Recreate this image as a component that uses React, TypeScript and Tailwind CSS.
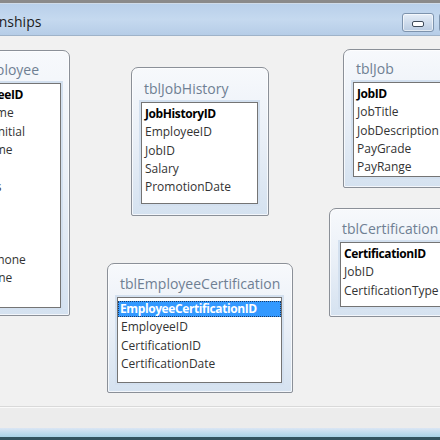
import React from "react";

type Field = { name: string; bold?: boolean; selected?: boolean };
type BoxProps = {
  title: string;
  left: number;
  top: number;
  w: number;
  h: number;
  listLeft: number;
  listTop: number;
  listW: number;
  listH: number;
  titleLeft?: number;
  fields: Field[];
};

function TableBox(p: BoxProps) {
  return (
    <div
      className="absolute rounded-t-[7px] rounded-b-[2px] border border-[#8b9098] bg-gradient-to-b from-[#f7f9fc] via-[#e9eff7] to-[#d5e2f0] shadow-[inset_0_0_0_1px_rgba(255,255,255,0.7)]"
      style={{ left: p.left, top: p.top, width: p.w, height: p.h }}
    >
      <div
        className="absolute whitespace-nowrap text-[14px] leading-[20px] text-[#6f7f93]"
        style={{ left: p.titleLeft ?? 12, top: p.listTop - 24 }}
      >
        {p.title}
      </div>
      <div
        className="absolute overflow-hidden border border-[#747474] bg-white pt-[2px] shadow-[0_0_0_2px_#d3e0ef]"
        style={{ left: p.listLeft - 1, top: p.listTop - 1, width: p.listW, height: p.listH }}
      >
        {p.fields.map((f) => (
          <div key={f.name} className="flex h-[18.3px] items-center whitespace-nowrap">
            {f.selected ? (
              <div className="flex h-[16px] w-full items-center bg-[#3399ff] pl-[2px] text-[12px] font-bold tracking-[-0.4px] text-white outline outline-1 outline-dotted outline-[#1a3a66] -outline-offset-1">
                {f.name}
              </div>
            ) : (
              <div
                className={
                  f.bold
                    ? "pl-[3px] text-[12px] font-bold tracking-[-0.4px] text-black"
                    : "pl-[3px] text-[12px] text-[#333333]"
                }
              >
                {f.name}
              </div>
            )}
          </div>
        ))}
      </div>
    </div>
  );
}

export default function App() {
  return (
    <div
      className="flex h-[440px] w-[440px] flex-col overflow-hidden bg-[#f0f0f0]"
      style={{ fontFamily: '"Open Sans", "Noto Sans", sans-serif' }}
    >
      <div className="h-[3px] shrink-0 bg-[#8a8a8a]" />
      <div className="h-[1px] shrink-0 bg-[#cfdbe8]" />
      <div className="flex h-[31px] shrink-0 items-start bg-gradient-to-b from-[#b9d0ea] via-[#c5d9ef] to-[#b6cde7]">
        <div className="ml-[-46px] flex-1 whitespace-nowrap pt-[7px] text-[14px] leading-[22px] text-[#1b1b1b]">
          Relationships
        </div>
        <div className="mr-[-31px] mt-[9px] flex shrink-0 gap-[5px]">
          <div className="flex h-[19px] w-[32px] items-end justify-center rounded-[3px] border border-[#7d93ad] bg-gradient-to-b from-[#e6eef8] via-[#cfdcec] to-[#b9cbe1] pb-[4px] shadow-[inset_0_0_0_1px_rgba(255,255,255,0.6)]">
            <div className="h-[6px] w-[12px] rounded-[2px] border border-[#3f4b5a] bg-white" />
          </div>
          <div className="h-[19px] w-[32px] rounded-[3px] border border-[#7d93ad] bg-gradient-to-b from-[#e6eef8] to-[#b9cbe1]" />
        </div>
      </div>
      <div className="h-[1px] shrink-0 bg-[#9fb3c9]" />
      <div className="relative h-[370px] shrink-0 bg-[#f1f1f1]">
        <TableBox
          title="tblEmployee"
          left={-58}
          top={14}
          w={128}
          h={266}
          listLeft={10}
          listTop={33}
          listW={109}
          listH={225}
          titleLeft={15}
          fields={[
            { name: "EmployeeID", bold: true },
            { name: "FirstName" },
            { name: "MiddleInitial" },
            { name: "LastName" },
            { name: "SSN" },
            { name: "Address" },
            { name: "City" },
            { name: "State" },
            { name: "Zip" },
            { name: "HomePhone" },
            { name: "CellPhone" },
            { name: "Email" },
          ]}
        />
        <TableBox
          title="tblJobHistory"
          left={131}
          top={31}
          w={138}
          h={149}
          listLeft={10}
          listTop={35}
          listW={117}
          listH={102}
          fields={[
            { name: "JobHistoryID", bold: true },
            { name: "EmployeeID" },
            { name: "JobID" },
            { name: "Salary" },
            { name: "PromotionDate" },
          ]}
        />
        <TableBox
          title="tblJob"
          left={343}
          top={13}
          w={140}
          h={139}
          listLeft={10}
          listTop={33}
          listW={125}
          listH={95}
          fields={[
            { name: "JobID", bold: true },
            { name: "JobTitle" },
            { name: "JobDescription" },
            { name: "PayGrade" },
            { name: "PayRange" },
          ]}
        />
        <TableBox
          title="tblCertification"
          left={329}
          top={172}
          w={140}
          h={109}
          listLeft={11}
          listTop={34}
          listW={125}
          listH={65}
          fields={[
            { name: "CertificationID", bold: true },
            { name: "JobID" },
            { name: "CertificationType" },
          ]}
        />
        <TableBox
          title="tblEmployeeCertification"
          left={107}
          top={227}
          w={186}
          h={130}
          listLeft={10}
          listTop={34}
          listW={165}
          listH={86}
          fields={[
            { name: "EmployeeCertificationID", selected: true },
            { name: "EmployeeID" },
            { name: "CertificationID" },
            { name: "CertificationDate" },
          ]}
        />
      </div>
      <div className="h-[1px] shrink-0 bg-[#d9d9d9]" />
      <div className="h-[21px] shrink-0 border-t border-[#fafafa] bg-[#ececec]" />
      <div className="h-[9px] shrink-0 bg-gradient-to-b from-[#dbe6f4] to-[#a8d2e6]" />
      <div className="h-[3px] shrink-0 bg-[#33535f]" />
    </div>
  );
}
